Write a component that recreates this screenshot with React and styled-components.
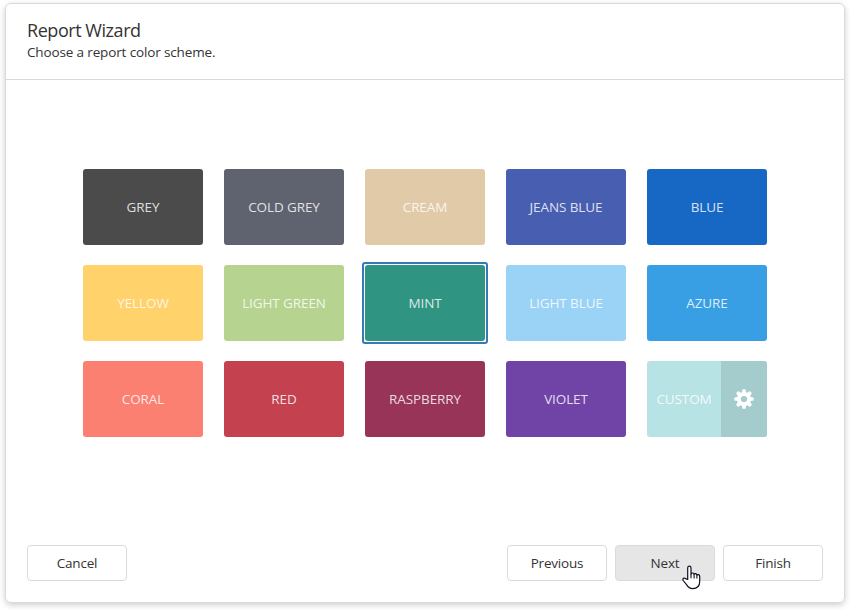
import React from "react";
import styled, { createGlobalStyle, css } from "styled-components";

const GlobalStyle = createGlobalStyle`
  * { box-sizing: border-box; }
  body {
    margin: 0;
    background: #fff;
    color: #333;
    font: 14px/20px "Open Sans", "Noto Sans", sans-serif;
    overflow: hidden;
  }
`;

const Page = styled.div`
  width: 850px;
  height: 610px;
  padding: 3px 5px 7px;
`;

const Dialog = styled.main`
  display: flex;
  flex-direction: column;
  width: 840px;
  height: 600px;
  border: 1px solid #dadada;
  border-radius: 6px;
  box-shadow: 0 2px 6px rgba(0, 0, 0, 0.2);
`;

const Header = styled.header`
  height: 76px;
  padding: 15px 21px 0;
  border-bottom: 1px solid #dadada;
`;

const Title = styled.h1`
  margin: 0;
  font-size: 18px;
  line-height: 22px;
  font-weight: 400;
  letter-spacing: -0.45px;
`;

const Subtitle = styled.p`
  margin: 0;
  font-size: 13.5px;
  line-height: 22px;
  letter-spacing: -0.14px;
`;

const Body = styled.section`
  flex: 1;
  padding: 89px 77px 0;
`;

const Swatches = styled.div`
  display: grid;
  grid-template-columns: repeat(5, 120px);
  grid-auto-rows: 76px;
  gap: 20px 21px;
`;

const selectionRing = css`
  &::after {
    content: "";
    position: absolute;
    inset: -3px;
    border: 2px solid #337ab7;
    border-radius: 3px;
  }
`;

const Swatch = styled.div`
  position: relative;
  display: flex;
  border-radius: 3px;
  background: ${(p) => p.$color};
  ${(p) => p.$selected && selectionRing}
`;

const SwatchLabel = styled.span`
  flex: 1;
  display: flex;
  align-items: center;
  justify-content: center;
  color: rgba(255, 255, 255, 0.83);
  font-size: 13.5px;
  letter-spacing: -0.1px;
  white-space: nowrap;
`;

const GearPanel = styled.span`
  display: flex;
  align-items: center;
  justify-content: center;
  width: 46px;
  border-radius: 0 3px 3px 0;
  background: #a4cccc;
`;

const Footer = styled.footer`
  display: flex;
  gap: 8px;
  padding: 0 21px 21px;
`;

const Button = styled.button`
  position: relative;
  width: 100px;
  height: 36px;
  padding: 0;
  border: 1px solid #dadada;
  border-radius: 4px;
  background: ${(p) => (p.$hover ? "#e6e6e6" : "#fff")};
  color: #333;
  font: 13.5px/20px "Open Sans", "Noto Sans", sans-serif;
  letter-spacing: -0.2px;
  margin-right: ${(p) => (p.$pushRest ? "auto" : "0")};
`;

const Cursor = styled.svg`
  position: absolute;
  left: 66px;
  top: 19px;
`;

const schemes = [
  ["GREY", "#4b4b4b"],
  ["COLD GREY", "#5f6370"],
  ["CREAM", "#e1caa7"],
  ["JEANS BLUE", "#475eb1"],
  ["BLUE", "#1768c4"],
  ["YELLOW", "#ffd26c"],
  ["LIGHT GREEN", "#b6d38f"],
  ["MINT", "#2f9481"],
  ["LIGHT BLUE", "#9bd3f7"],
  ["AZURE", "#389fe5"],
  ["CORAL", "#fb8072"],
  ["RED", "#c4424f"],
  ["RASPBERRY", "#983458"],
  ["VIOLET", "#7044a7"],
  ["CUSTOM", "#b7e3e4"],
];

const teeth = [0, 45, 90, 135, 180, 225, 270, 315];

function Gear() {
  return (
    <svg width="20" height="20" viewBox="-10 -10 20 20" fill="#fff">
      {teeth.map((angle) => (
        <path key={angle} d="M-2.1-6 L-1.6-9.2 Q-1.5-9.8-.9-9.8 H.9 Q1.5-9.8 1.6-9.2 L2.1-6Z" transform={`rotate(${angle})`} />
      ))}
      <circle r="5.1" fill="none" stroke="#fff" strokeWidth="4" />
    </svg>
  );
}

function HandCursor() {
  return (
    <Cursor width="19" height="25" viewBox="0 0 19 25">
      <path
        d="M5.7 14.5V3C5.7 .6 9 .6 9 3v6.2c.3-1.8 3-1.5 3.1.3.4-1.4 2.8-1.1 2.8.7.5-1.1 2.8-.8 2.8 1.2v5.1c0 4.5-2.9 7.1-7.1 7.1-3.1 0-4.6-1.5-5.9-3.7L1.2 15.5c-1-2 1-3.2 2.4-1.9Z"
        fill="#fff"
        stroke="#10101f"
        strokeWidth="1.2"
        strokeLinejoin="round"
      />
      <path d="M9 9v4.2M12.1 9.5v3.9M14.9 10.2v3.4" stroke="#10101f" strokeWidth="1.1" />
    </Cursor>
  );
}

export default function App() {
  return (
    <Page>
      <GlobalStyle />
      <Dialog>
        <Header>
          <Title>Report Wizard</Title>
          <Subtitle>Choose a report color scheme.</Subtitle>
        </Header>
        <Body>
          <Swatches>
            {schemes.map(([name, color]) => (
              <Swatch key={name} $color={color} $selected={name === "MINT"}>
                <SwatchLabel>{name}</SwatchLabel>
                {name === "CUSTOM" && (
                  <GearPanel>
                    <Gear />
                  </GearPanel>
                )}
              </Swatch>
            ))}
          </Swatches>
        </Body>
        <Footer>
          <Button $pushRest>Cancel</Button>
          <Button>Previous</Button>
          <Button $hover>
            Next
            <HandCursor />
          </Button>
          <Button>Finish</Button>
        </Footer>
      </Dialog>
    </Page>
  );
}
